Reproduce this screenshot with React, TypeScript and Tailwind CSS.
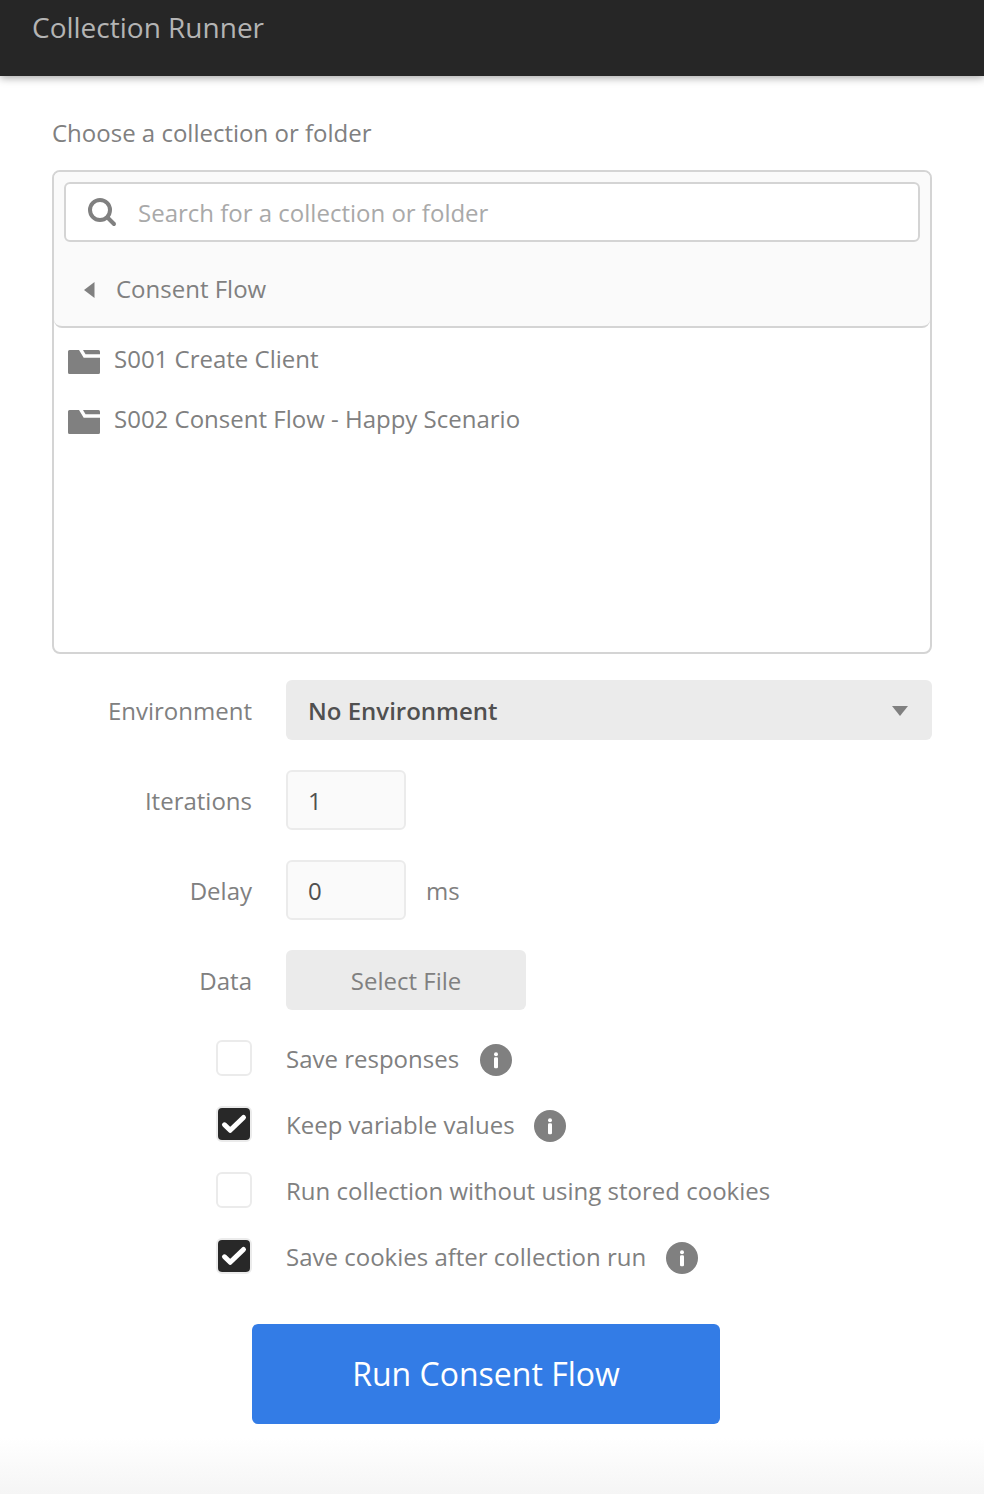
const Folder = () => (
  <svg className="mt-2 h-6 w-8 shrink-0" viewBox="0 0 32 24" fill="#808080">
    <path d="M0 1.5A1.5 1.5 0 0 1 1.5 0H11L15.7 7.7H32v14.8a1.5 1.5 0 0 1-1.5 1.5h-29A1.5 1.5 0 0 1 0 22.5z" />
    <path d="M15 0h15.5A1.5 1.5 0 0 1 32 1.5V4.3H17.5z" />
  </svg>
);

const Info = ({ className }: { className: string }) => (
  <svg className={className} viewBox="0 0 32 32">
    <circle cx="16" cy="16" r="16" fill="#808080" />
    <circle cx="16" cy="10.3" r="2" fill="#fff" />
    <rect x="14" y="13.2" width="4" height="11" rx="1.2" fill="#fff" />
  </svg>
);

const Check = ({ checked }: { checked?: boolean }) => (
  <span className="flex size-9 rounded-md border-2 border-[#ebebeb] bg-white">
    {checked && (
      <svg className="size-8 shrink-0 rounded bg-[#282828]" viewBox="0 0 32 32" fill="none" stroke="#fff" strokeWidth="5" strokeLinecap="round" strokeLinejoin="round">
        <path d="M6.5 16.8l5.7 5.5L25.5 9.5" />
      </svg>
    )}
  </span>
);

const options = [
  { text: "Save responses", iconClass: "mt-1 ml-[21px] size-8 shrink-0", checked: false },
  { text: "Keep variable values", iconClass: "mt-1 ml-[19px] size-8 shrink-0", checked: true },
  { text: "Run collection without using stored cookies", iconClass: "", checked: false },
  { text: "Save cookies after collection run", iconClass: "mt-1 ml-5 size-8 shrink-0", checked: true },
];

export default function App() {
  return (
    <div className="flex h-[1494px] w-[984px] flex-col bg-white font-['Open_Sans',sans-serif] text-2xl text-[#808080]">
      <header className="h-[76px] shrink-0 bg-[#262626] pl-8 pt-[9px] text-[28px] leading-9 text-[#b4b4b4] shadow-[0_2px_8px_rgba(0,0,0,0.35)]">Collection Runner</header>
      <main className="flex flex-col px-[52px] pt-[41px]">
        <h2 className="h-[53px] leading-8">Choose a collection or folder</h2>
        <section className="h-[484px] overflow-hidden rounded-lg border-2 border-[#d4d4d4] bg-white">
          <div className="h-[156px] rounded-b-lg border-b-2 border-[#d4d4d4] bg-[#fafafa] p-2.5">
            <div className="flex h-[60px] items-center rounded-md border-2 border-[#d4d4d4] bg-white pl-[22px] text-[#a9a9a9]">
              <svg className="mr-5 size-[30px]" viewBox="0 0 30 30" fill="none" stroke="#808080" strokeWidth="4"><circle cx="12" cy="13" r="10" /><path d="M19.5 20.5l6.5 6.5" strokeLinecap="round" /></svg>
              <span className="pt-0.5">Search for a collection or folder</span>
            </div>
            <div className="flex h-[74px] items-center pl-5 pt-5">
              <svg className="mr-[21px] mt-0.5 h-4 w-[11px]" viewBox="0 0 11 16" fill="#808080"><path d="M0 8L10.5 0v16z" /></svg>
              <span>Consent Flow</span>
            </div>
          </div>
          <div className="flex h-[60px] items-center gap-3.5 px-3.5"><Folder /><span className="pt-0.5">S001 Create Client</span></div>
          <div className="flex h-[60px] items-center gap-3.5 px-3.5"><Folder /><span className="pt-0.5">S002 Consent Flow - Happy Scenario</span></div>
        </section>
        <div className="mt-[26px] grid grid-cols-[200px_1fr] items-center gap-x-[34px] gap-y-[30px]">
          <span className="pt-0.5 text-right">Environment</span>
          <div className="flex h-[60px] items-center justify-between rounded-md bg-[#ebebeb] pl-[22px] pr-6 pt-0.5 font-semibold text-[#505050]">No Environment<svg className="h-2.5 w-4" viewBox="0 0 16 10" fill="#808080"><path d="M0 0h16L8 10z" /></svg></div>
          <span className="pt-0.5 text-right">Iterations</span>
          <div className="flex h-[60px] w-[120px] items-center rounded-md border-2 border-[#ebebeb] bg-[#fafafa] pl-5 pt-0.5 text-[#505050]">1</div>
          <span className="pt-0.5 text-right">Delay</span>
          <div className="flex items-center gap-5"><div className="flex h-[60px] w-[120px] items-center rounded-md border-2 border-[#ebebeb] bg-[#fafafa] pl-5 pt-0.5 text-[#505050]">0</div><span className="pt-0.5">ms</span></div>
          <span className="pt-0.5 text-right">Data</span>
          <button className="h-[60px] w-60 rounded-md bg-[#ebebeb] pt-0.5">Select File</button>
        </div>
        <div className="mt-[30px] flex flex-col gap-[30px] pl-[164px]">
          {options.map((o) => (
            <div key={o.text} className="flex h-9 items-center">
              <Check checked={o.checked} />
              <span className="ml-[34px] pt-0.5">{o.text}</span>
              {o.iconClass && <Info className={o.iconClass} />}
            </div>
          ))}
        </div>
        <button className="ml-[200px] mt-[50px] h-[100px] w-[468px] rounded-md bg-[#337ce6] text-[32px] text-white">Run Consent Flow</button>
      </main>
      <div className="mt-auto h-14 bg-linear-to-b from-white to-[#f5f5f5]" />
    </div>
  );
}
